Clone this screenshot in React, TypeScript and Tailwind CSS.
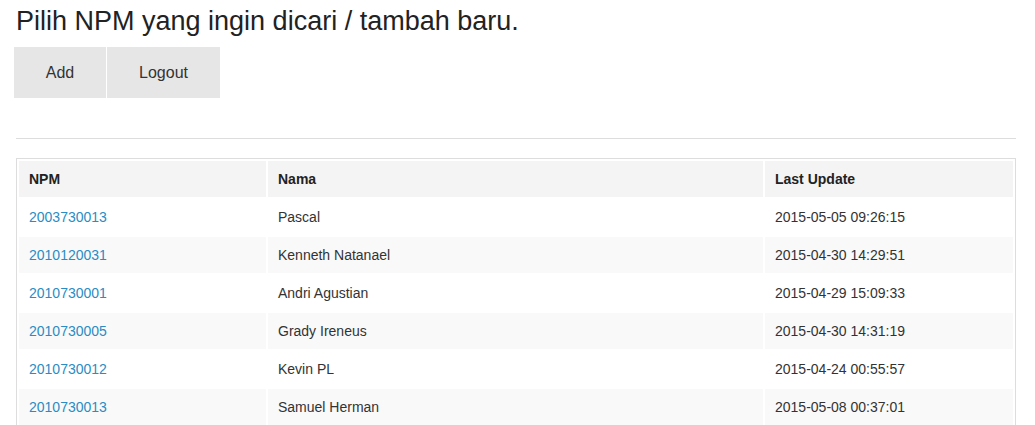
const rows = [
  { npm: '2003730013', nama: 'Pascal', updated: '2015-05-05 09:26:15' },
  { npm: '2010120031', nama: 'Kenneth Natanael', updated: '2015-04-30 14:29:51' },
  { npm: '2010730001', nama: 'Andri Agustian', updated: '2015-04-29 15:09:33' },
  { npm: '2010730005', nama: 'Grady Ireneus', updated: '2015-04-30 14:31:19' },
  { npm: '2010730012', nama: 'Kevin PL', updated: '2015-04-24 00:55:57' },
  { npm: '2010730013', nama: 'Samuel Herman', updated: '2015-05-08 00:37:01' },
];

export default function App() {
  return (
    <div className="min-h-screen bg-white pl-4 font-['Liberation_Sans',Arial,sans-serif] text-[#333]">
      <h1 className="pt-[6px] text-[27px] leading-[31px] text-[#222]">Pilih NPM yang ingin dicari / tambah baru.</h1>

      <div className="mt-[10px] ml-[-2px] flex gap-px">
        <button className="h-[51px] w-[92px] bg-[#e6e6e6] text-[16px] text-[#333]">Add</button>
        <button className="h-[51px] w-[113px] bg-[#e6e6e6] text-[16px] text-[#333]">Logout</button>
      </div>

      <hr className="mt-[40px] w-[1000px] border-0 border-t border-[#ddd]" />

      <table className="mt-[19px] w-[1000px] table-fixed border-separate border-spacing-[2px] border border-[#ddd] text-[14px] leading-[20px]">
        <thead>
          <tr>
            <th className="w-[247px] bg-[#f4f4f4] px-[10px] py-[8px] text-left font-bold text-[#222]">NPM</th>
            <th className="w-[495px] bg-[#f4f4f4] px-[10px] py-[8px] text-left font-bold text-[#222]">Nama</th>
            <th className="w-[248px] bg-[#f4f4f4] px-[10px] py-[8px] text-left font-bold text-[#222]">Last Update</th>
          </tr>
        </thead>
        <tbody>
          {rows.map((r, i) => (
            <tr key={r.npm} className={i % 2 === 1 ? 'bg-[#f9f9f9]' : 'bg-white'}>
              <td className="px-[10px] py-[8px]">
                <a href="#" className="text-[#2a8cc4]">{r.npm}</a>
              </td>
              <td className="px-[10px] py-[8px]">{r.nama}</td>
              <td className="px-[10px] py-[8px]">{r.updated}</td>
            </tr>
          ))}
        </tbody>
      </table>
    </div>
  );
}
